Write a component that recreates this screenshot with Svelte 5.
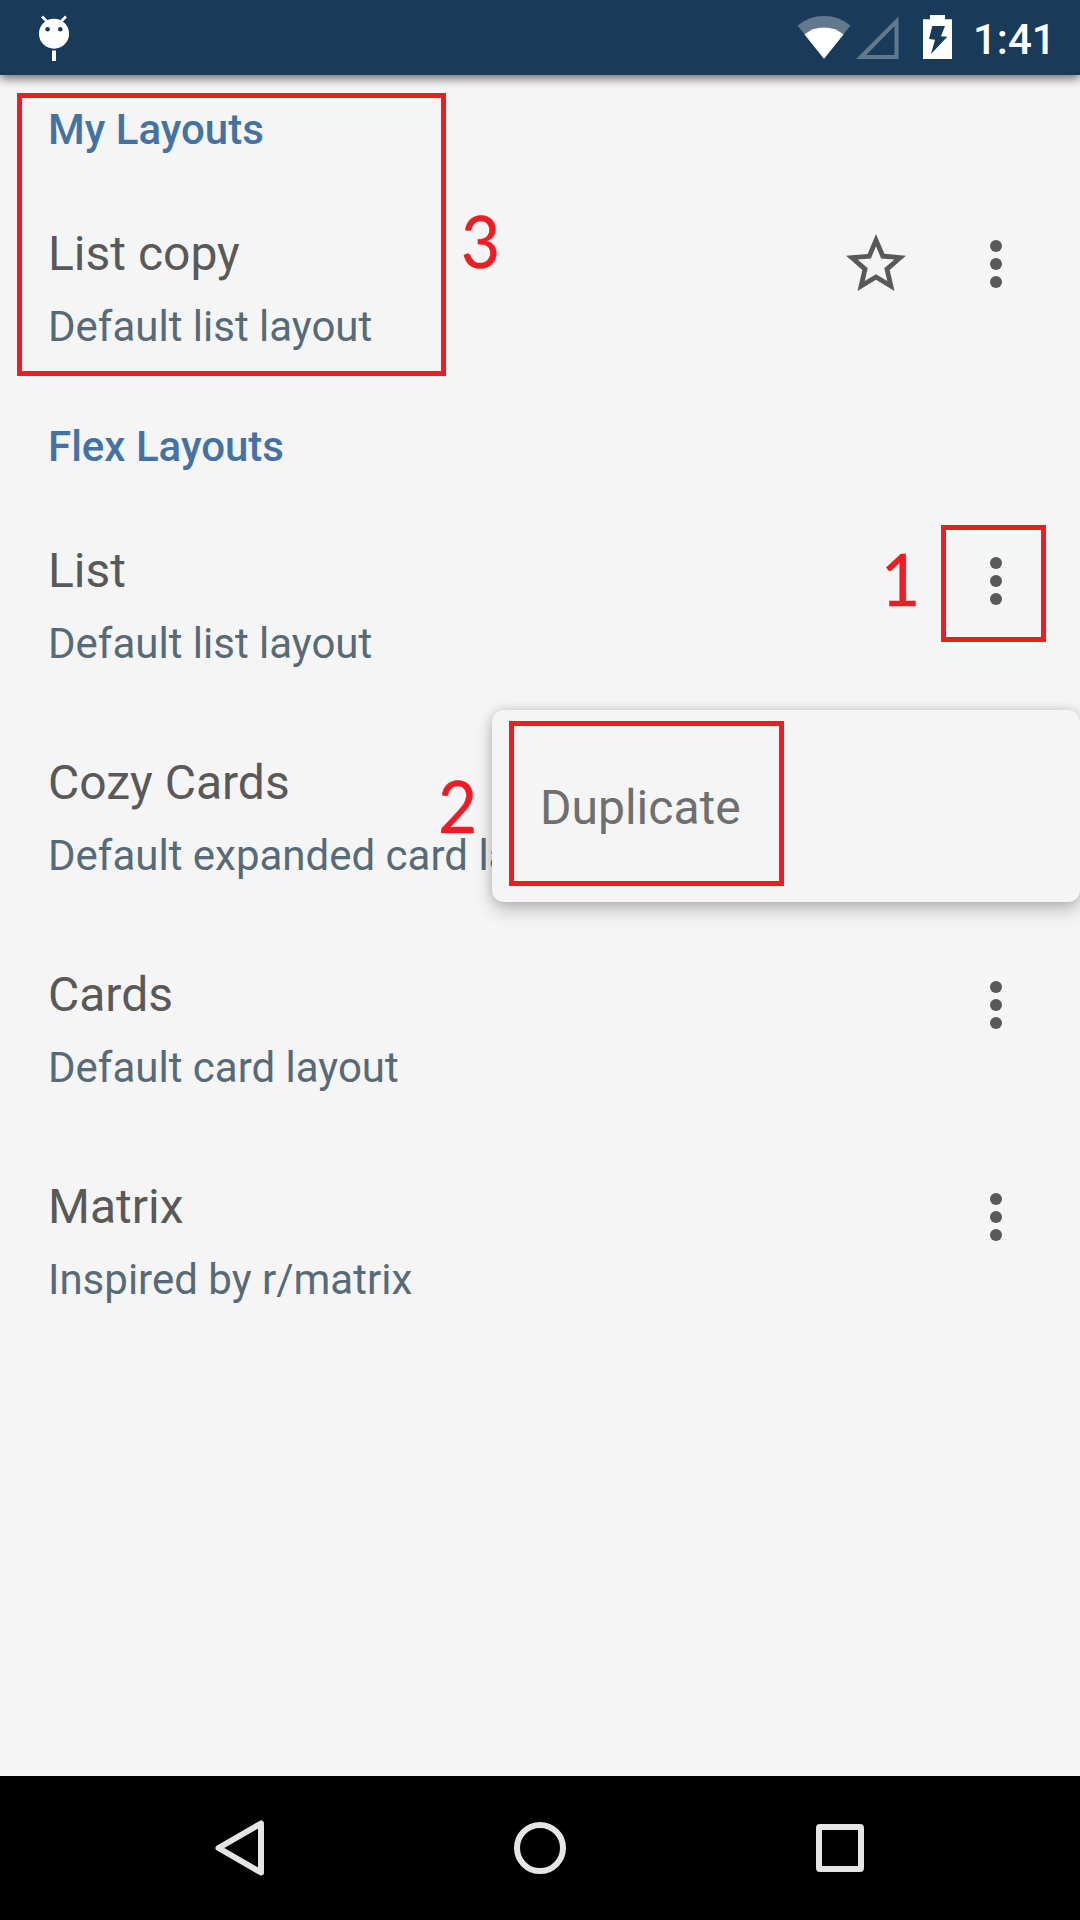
<script>
  const sections = [
    {
      title: 'My Layouts',
      rows: [{ name: 'List copy', detail: 'Default list layout', starred: true }]
    },
    {
      title: 'Flex Layouts',
      rows: [
        { name: 'List', detail: 'Default list layout' },
        { name: 'Cozy Cards', detail: 'Default expanded card layout' },
        { name: 'Cards', detail: 'Default card layout' },
        { name: 'Matrix', detail: 'Inspired by r/matrix' }
      ]
    }
  ];
</script>

<div class="screen">
  <header class="status">
    <svg class="debug" width="32" height="48" viewBox="38 14 32 48">
      <path d="M42 16.5l5 5M66 16.5l-5 5" stroke="#fff" stroke-width="2.6" />
      <circle cx="54" cy="33.7" r="15" fill="#fff" />
      <circle cx="47.6" cy="29.3" r="2.3" fill="#193a59" />
      <circle cx="60.3" cy="29.3" r="2.3" fill="#193a59" />
      <path d="M52 50.5h4V61h-4z" fill="#fff" />
    </svg>
    <div class="indicators">
      <svg width="54" height="44" viewBox="796.5 15 54 44">
        <path d="M823.5 58.7L797 25.6Q808 16 823.5 16T850 25.6Z" fill="#62788d" />
        <path d="M823.5 58.7L804 34.4Q812 27.5 823.5 27.5T843 34.4Z" fill="#fff" />
      </svg>
      <svg class="signal" width="43" height="44" viewBox="855.5 15 43 44">
        <path fill-rule="evenodd" d="M855.5 59H898V16.5ZM865.7 55H894V26.3Z" fill="#62788d" />
      </svg>
      <svg class="battery" width="29" height="44" viewBox="923 15 29 44">
        <path d="M923 19.3h7V15h15v4.3h7V59h-29z" fill="#fff" />
        <path d="M932.3 26H945l-4 10.2 6.3.5L931 54l4-14.3-6-.7z" fill="#193a59" />
      </svg>
      <span class="clock">1:41</span>
    </div>
  </header>

  <main>
    {#each sections as section}
      <section>
        <h2>{section.title}</h2>
        {#each section.rows as row}
          <article>
            <div class="text">
              <h3>{row.name}</h3>
              <p>{row.detail}</p>
            </div>
            {#if row.starred}
              <svg class="icon" viewBox="0 0 24 24">
                <path d="M22 9.24l-7.19-.62L12 2 9.19 8.63 2 9.24l5.46 4.73L5.82 21 12 17.27 18.18 21l-1.63-7.03L22 9.24zM12 15.4l-3.76 2.27 1-4.28-3.32-2.88 4.38-.38L12 6.1l1.71 4.04 4.38.38-3.32 2.88 1 4.28L12 15.4z" />
              </svg>
            {/if}
            <svg class="icon" viewBox="0 0 24 24">
              <circle cx="12" cy="6" r="2" />
              <circle cx="12" cy="12" r="2" />
              <circle cx="12" cy="18" r="2" />
            </svg>
          </article>
        {/each}
      </section>
    {/each}
  </main>

  <nav>
    <div class="key">
      <svg width="60" height="60" viewBox="210 1818 60 60">
        <path d="M261 1823.5v49L218.5 1848z" />
      </svg>
    </div>
    <div class="key">
      <svg width="60" height="60" viewBox="0 0 60 60"><circle cx="30" cy="30" r="23" /></svg>
    </div>
    <div class="key">
      <svg width="60" height="60" viewBox="0 0 60 60">
        <rect x="9" y="9" width="42" height="42" rx="1" />
      </svg>
    </div>
  </nav>

  <div class="menu">Duplicate</div>

  <div class="mark box-one"></div>
  <div class="mark box-two"></div>
  <div class="mark box-three"></div>
  <span class="step step-one">1</span>
  <span class="step step-two">2</span>
  <span class="step step-three">3</span>
</div>

<style>
  .screen {
    position: relative;
    display: flex;
    flex-direction: column;
    width: 1080px;
    height: 1920px;
    overflow: hidden;
    background: #f5f5f5;
    font-family: Roboto, sans-serif;
  }
  .screen, .screen * {
    box-sizing: border-box;
  }
  svg {
    display: block;
    flex: none;
  }
  .status {
    display: flex;
    justify-content: space-between;
    flex: none;
    height: 75px;
    padding: 14px 29px 0 38px;
    background: #193a59;
    box-shadow: 0 4px 9px rgba(0, 0, 0, 0.52);
  }
  .indicators {
    display: flex;
    padding-top: 1px;
  }
  .signal {
    margin-left: 5px;
  }
  .battery {
    margin-left: 24.5px;
  }
  .clock {
    width: 78px;
    margin-left: 21px;
    color: #fff;
    font-size: 42px;
    font-weight: 500;
    line-height: 49px;
    white-space: nowrap;
  }
  main {
    flex: 1;
  }
  h2, h3, p {
    margin: 0;
  }
  h2 {
    display: flex;
    align-items: flex-end;
    height: 105px;
    padding: 0 48px 3px;
    color: #4473a3;
    font-size: 42px;
    font-weight: 500;
    line-height: 50px;
  }
  section:first-child h2 {
    height: 83px;
  }
  article {
    display: flex;
    align-items: center;
    gap: 48px;
    height: 212px;
    padding: 0 48px;
  }
  .text {
    flex: 1;
    align-self: flex-start;
    padding-top: 64px;
    white-space: nowrap;
  }
  h3 {
    color: #595959;
    font-size: 48px;
    font-weight: 400;
    line-height: 64px;
  }
  p {
    margin-top: 13px;
    color: #576a77;
    font-size: 42px;
    line-height: 56px;
  }
  .icon {
    width: 72px;
    height: 72px;
    fill: #595959;
  }
  nav {
    display: flex;
    align-items: center;
    flex: none;
    height: 144px;
    padding: 0 90px;
    background: #000;
  }
  .key {
    display: flex;
    flex: 1;
    justify-content: center;
  }
  .key svg {
    fill: none;
    stroke: #e5e5e5;
    stroke-width: 6px;
    stroke-linejoin: round;
  }
  .menu {
    position: absolute;
    left: 492px;
    top: 710px;
    display: flex;
    align-items: center;
    width: 588px;
    height: 192px;
    padding: 2px 48px 0;
    border-radius: 12px;
    background: #f5f5f5;
    box-shadow: 0 9px 18px rgba(0, 0, 0, 0.2), 0 0 12px rgba(0, 0, 0, 0.16);
    color: #6f6f6f;
    font-size: 48px;
  }
  .mark {
    position: absolute;
    border: 5px solid #ee1c24;
  }
  .box-one {
    left: 941px;
    top: 525px;
    width: 105px;
    height: 117px;
  }
  .box-two {
    left: 509px;
    top: 721px;
    width: 275px;
    height: 165px;
  }
  .box-three {
    left: 17px;
    top: 93px;
    width: 429px;
    height: 283px;
  }
  .step {
    position: absolute;
    width: 40px;
    color: #ee1c24;
    font-family: Lato, sans-serif;
    font-size: 71px;
    line-height: 80px;
    text-align: center;
    -webkit-text-stroke: 0.5px #ee1c24;
    transform: scaleX(0.95);
  }
  .step-one {
    left: 880px;
    top: 539px;
  }
  .step-two {
    left: 437px;
    top: 766px;
  }
  .step-three {
    left: 460px;
    top: 201px;
  }
</style>
